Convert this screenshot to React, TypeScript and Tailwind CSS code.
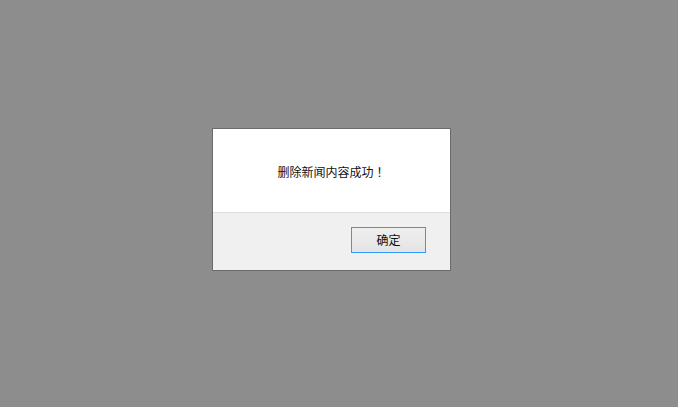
export default function App() {
  return (
    <div
      className="w-[678px] h-[407px] bg-[#8d8d8d] pl-[212px] pt-[128px]"
      style={{ fontFamily: '"Noto Sans CJK TC", "Liberation Sans", sans-serif' }}
    >
      <div className="w-[239px] h-[143px] border border-[#6b6b6b] bg-white flex flex-col">
        <div className="h-[83px] flex items-center justify-center text-[12px] text-[#111] pt-[2px]">
          删除新闻内容成功！
        </div>
        <div className="flex-1 bg-[#f0f0f0] border-t border-[#dfdfdf] flex items-start justify-end pt-[14px] pr-[24px]">
          <button className="w-[75px] h-[26px] border border-[#3399ff] bg-gradient-to-b from-[#efefef] to-[#e4e4e4] text-[12px] text-[#111] flex items-center justify-center">
            确定
          </button>
        </div>
      </div>
    </div>
  );
}
